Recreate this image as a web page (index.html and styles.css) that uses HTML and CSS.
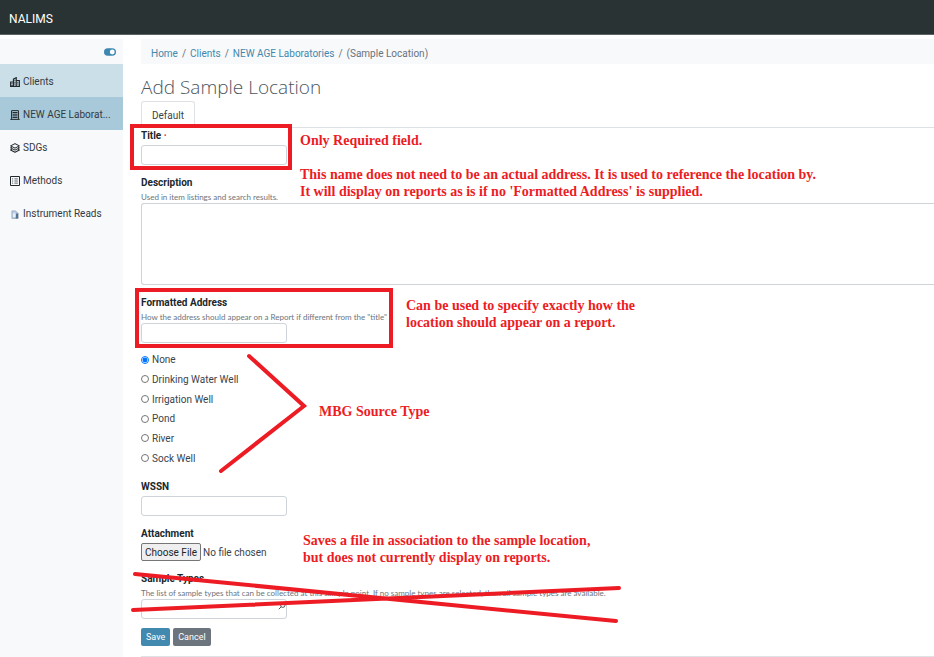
FILE: index.html
```html
<!DOCTYPE html>
<html lang="en">
<head>
<meta charset="utf-8">
<title>Add Sample Location - NALIMS</title>
<link rel="stylesheet" href="styles.css">
</head>
<body>
<header class="topbar"><a class="brand" href="#">NALIMS</a></header>
<div class="layout">
  <nav class="sidebar" aria-label="Main">
    <div class="sidebar-tools">
      <button class="toggle" type="button" aria-label="Toggle sidebar">
        <svg width="12" height="12" viewBox="0 0 16 16" fill="currentColor"><path d="M5 3a5 5 0 0 0 0 10h6a5 5 0 0 0 0-10H5zm6 8.3a3.3 3.3 0 1 1 0-6.6 3.3 3.3 0 0 1 0 6.6z"/></svg>
      </button>
    </div>
    <a class="nav-item is-parent" href="#">
      <svg class="icon" viewBox="0 0 16 16" fill="none" stroke="currentColor" stroke-width="1.8"><path d="M1 15V8h4.5M5.5 15V3.5L10 1v14M10 5.5h5V15M0 15h16"/><path d="M3.3 10v1.6M3.3 12.8V15M7.8 4.5V6M7.8 7.5V9M7.8 10.5V12M12.5 7.5V9M12.5 10.5V12"/></svg>
      <span>Clients</span>
    </a>
    <a class="nav-item is-current" href="#">
      <svg class="icon" viewBox="0 0 16 16" fill="none" stroke="currentColor" stroke-width="1.6"><path d="M2.5 15V1h11v14M.5 15h15"/><path d="M4 4h8M4 6.7h8M4 9.4h8M4 12.1h8"/></svg>
      <span>NEW AGE Laborat...</span>
    </a>
    <a class="nav-item" href="#">
      <svg class="icon" viewBox="0 0 16 16" fill="none" stroke="currentColor" stroke-width="1.7" stroke-linejoin="round"><path d="M8 1l7 3.6-7 3.6-7-3.6z"/><path d="M3 6.7L1 7.8l7 3.6 7-3.6-2-1.1M3 10L1 11.2l7 3.6 7-3.6-2-1.2"/></svg>
      <span>SDGs</span>
    </a>
    <a class="nav-item" href="#">
      <svg class="icon" viewBox="0 0 16 16" fill="none" stroke="currentColor" stroke-width="1.6"><path d="M.8.8h14.4v14.4H.8z"/><path d="M3.2 4.6h1.8M3.2 8h1.8M3.2 11.4h1.8M7 4.6h5.5M7 8h5.5M7 11.4h5.5" opacity=".7"/></svg>
      <span>Methods</span>
    </a>
    <a class="nav-item" href="#">
      <svg class="icon" viewBox="0 0 16 16"><path d="M3 3h6l4 4v8H3z" fill="#b9d0e6" stroke="#8797a8"/><path d="M9 3v4h4v8H9z" fill="#55718f"/><path d="M5 7h4v6H5z" fill="#eaf3fb"/></svg>
      <span>Instrument Reads</span>
    </a>
  </nav>

  <main class="main">
    <nav class="breadcrumb" aria-label="Breadcrumb">
      <a href="#">Home</a><span>/</span><a href="#">Clients</a><span>/</span><a href="#">NEW AGE Laboratories</a><span>/</span><span>(Sample Location)</span>
    </nav>
    <h1>Add Sample Location</h1>
    <div class="tabs" role="tablist"><button class="tab" type="button" role="tab" aria-selected="true">Default</button></div>

    <form>
      <div class="field">
        <label for="title">Title <span class="required">·</span></label>
        <input class="text" id="title" type="text">
      </div>
      <div class="field">
        <label for="description">Description</label>
        <small>Used in item listings and search results.</small>
        <textarea id="description"></textarea>
      </div>
      <div class="field">
        <label for="address">Formatted Address</label>
        <small>How the address should appear on a Report if different from the "title"</small>
        <input class="text" id="address" type="text">
      </div>
      <div class="radios" role="radiogroup" aria-label="Source type">
        <label><input type="radio" name="source" checked>None</label>
        <label><input type="radio" name="source">Drinking Water Well</label>
        <label><input type="radio" name="source">Irrigation Well</label>
        <label><input type="radio" name="source">Pond</label>
        <label><input type="radio" name="source">River</label>
        <label><input type="radio" name="source">Sock Well</label>
      </div>
      <div class="field">
        <label for="wssn">WSSN</label>
        <input class="text" id="wssn" type="text">
      </div>
      <div class="field">
        <label for="attachment">Attachment</label>
        <input class="file" id="attachment" type="file">
      </div>
      <div class="field">
        <label for="types">Sample Types</label>
        <small>The list of sample types that can be collected at this sample point. If no sample types are selected, then all sample types are available.</small>
        <div class="lookup">
          <input class="text" id="types" type="text">
          <svg class="lookup-icon" viewBox="0 0 8 8" fill="none" stroke="currentColor"><circle cx="4.8" cy="3.2" r="2.2"/><path d="M3.2 4.8L.8 7.2"/></svg>
        </div>
      </div>
      <div class="actions">
        <button class="btn save" type="submit">Save</button>
        <button class="btn cancel" type="button">Cancel</button>
      </div>
    </form>
    <hr>
  </main>
</div>

<div class="markup">
  <svg class="strokes" width="934" height="657" viewBox="0 0 934 657" fill="none" stroke="currentColor" stroke-width="4" aria-hidden="true">
    <path d="M132 126h158v42H132zM137 290h254v56H137z"/>
    <path d="M249 356l55 50-83 65M135 574l481 47M133 610l486-22" stroke-linecap="round"/>
  </svg>
  <p class="note note-title">Only Required field.<br><br>This name does not need to be an actual address. It is used to reference the location by.<br>It will display on reports as is if no 'Formatted Address' is supplied.</p>
  <p class="note note-address">Can be used to specify exactly how the<br>location should appear on a report.</p>
  <p class="note note-source">MBG Source Type</p>
  <p class="note note-file">Saves a file in association to the sample location,<br>but does not currently display on reports.</p>
</div>
</body>
</html>
```
FILE: styles.css
```css
* { box-sizing: border-box; }

body {
  margin: 0;
  min-height: 100vh;
  display: flex;
  flex-direction: column;
  position: relative;
  overflow: hidden;
  background: #fff;
  color: #3a444c;
  font: 10px/15px Roboto, "Open Sans", sans-serif;
}

a { color: #4388ac; text-decoration: none; }
button, input, textarea { font: inherit; color: inherit; }

.topbar {
  display: flex;
  align-items: center;
  height: 35px;
  padding: 3px 9px 0;
  background: #2a3334;
  border-bottom: 1px solid #5c6364;
}
.brand { color: #fff; font: 12px/16px Roboto, sans-serif; }

.layout { flex: 1; display: flex; padding-top: 4px; }

.sidebar { flex: 0 0 123px; background: #f8f9fb; }
.sidebar-tools {
  display: flex;
  justify-content: flex-end;
  align-items: center;
  height: 25px;
  padding-right: 7px;
}
.toggle { display: flex; padding: 0; border: 0; background: none; color: #3d87b0; }
.nav-item {
  display: flex;
  align-items: center;
  gap: 3px;
  height: 33px;
  padding: 2px 0 0 10px;
  color: #343a40;
  white-space: nowrap;
}
.icon { width: 10px; height: 10px; color: #22282c; }
.is-parent { background: #cbdfe8; }
.is-current { background: #a8c9da; }

.main { flex: 1; min-width: 0; margin-left: 18px; }

.breadcrumb {
  display: flex;
  align-items: center;
  gap: 4px;
  height: 25px;
  padding: 3px 10px 0;
  background: #f8f9fb;
  color: #68727b;
}

h1 {
  margin: 10px 0 1px;
  color: #4b555d;
  font: 300 19px/26px "Open Sans", "Noto Sans", sans-serif;
}

.tabs { display: flex; border-bottom: 1px solid #dee2e6; }
.tab {
  height: 26px;
  padding: 2px 10px 0;
  border: 1px solid #dee2e6;
  border-bottom: 0;
  border-radius: 3px 3px 0 0;
  background: #fff;
}

.field { display: flex; flex-direction: column; align-items: flex-start; margin-bottom: 10px; }
.field label { margin-bottom: 2px; color: #20272c; font-weight: 700; }
.required { color: #dc3545; }
small { color: #6c757d; font: 8px/11px Lato, "Open Sans", sans-serif; white-space: nowrap; }

.text, textarea { border: 1px solid #ced4da; border-radius: 3px; background: #fff; }
.text { width: 146px; height: 20px; padding: 0 5px; }
textarea {
  width: 100%;
  height: 82px;
  border-right: 0;
  border-radius: 3px 0 0 3px;
  resize: none;
}

.radios { display: grid; grid-auto-rows: 1fr; height: 118px; margin: -3px 0 11px; }
.radios label { display: flex; align-items: center; gap: 3px; }
.radios input { width: 8px; height: 8px; margin: 0; }

.file { height: 18px; width: 146px; }
.file::file-selector-button {
  height: 18px;
  margin: 0 2px 0 0;
  padding: 0 3px;
  border: 1px solid #767676;
  border-radius: 2px;
  background: #efefef;
  color: #20272c;
  font: inherit;
}

.lookup { position: relative; display: flex; }
.lookup-icon { position: absolute; right: 1px; top: 3px; width: 8px; height: 8px; color: #555; }

.actions { display: flex; gap: 3px; margin-top: -1px; }
.btn {
  height: 18px;
  padding: 0 5px;
  border: 0;
  border-radius: 2px;
  color: #fff;
  font-size: 9px;
}
.save { background: #4289b0; }
.cancel { background: #6c757d; }

hr { margin: 10px 0 0; border: 0; border-top: 1px solid #dee2e6; }

/* Red pen annotations drawn over the form */
.markup { position: absolute; inset: 0; pointer-events: none; color: #ed1c24; }
.strokes { position: absolute; left: 0; top: 0; }
.note {
  position: absolute;
  margin: 0;
  font: bold 14px/17px "Liberation Serif", serif;
  white-space: nowrap;
}
.note-title { left: 300px; top: 132px; }
.note-address { left: 406px; top: 297px; }
.note-source { left: 319px; top: 403px; }
.note-file { left: 303px; top: 532px; }
```
